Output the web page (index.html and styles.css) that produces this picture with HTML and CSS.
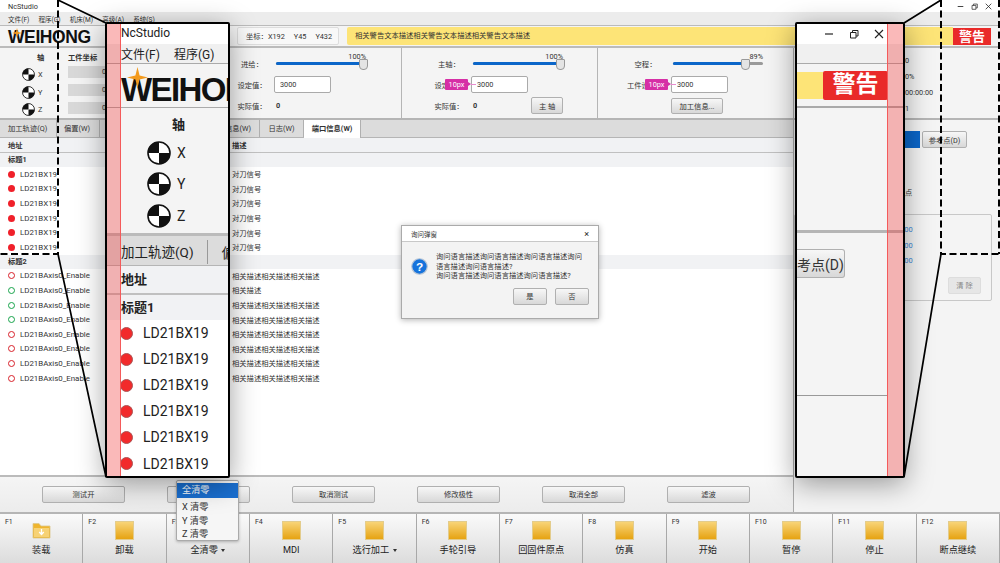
FILE: index.html
```html
<!DOCTYPE html>
<html>
<head>
    <title>NcStudio</title>
    <link rel="stylesheet" href="styles.css">
</head>
<body>
<svg class="defs" width="0" height="0">
    <symbol id="axis" viewBox="0 0 24 24">
        <circle cx="12" cy="12" r="11" fill="#fff" stroke="#111" stroke-width="1.6"/>
        <path d="M12 12V1A11 11 0 0 0 1 12Z" fill="#111"/>
        <path d="M12 12H23A11 11 0 0 1 12 23Z" fill="#111"/>
    </symbol>
    <symbol id="star" viewBox="0 0 20 20">
        <path d="M10 0L12 8 20 10 12 12 10 20 8 12 0 10 8 8Z" fill="#f39a1d"/>
    </symbol>
    <symbol id="winmin" viewBox="0 0 10 10"><path d="M1 5H9" stroke="#222" stroke-width="1.2"/></symbol>
    <symbol id="winmax" viewBox="0 0 10 10"><path d="M1.5 3.5H7V9H1.5ZM3.5 3.5V1.5H9V7H7" fill="none" stroke="#222" stroke-width="1"/></symbol>
    <symbol id="winclose" viewBox="0 0 10 10"><path d="M1 1L9 9M9 1L1 9" stroke="#222" stroke-width="1.1"/></symbol>
</svg>

<div class="app">
    <div class="titlebar">
        <span>NcStudio</span>
        <div class="winbtns">
            <svg class="winbtn"><use href="#winmin"/></svg>
            <svg class="winbtn"><use href="#winmax"/></svg>
            <svg class="winbtn"><use href="#winclose"/></svg>
        </div>
    </div>
    <div class="menubar">
        <span>文件(F)</span><span>程序(G)</span><span>机床(M)</span><span>高级(A)</span><span>系统(S)</span>
    </div>
    <div class="toolbar">
        <div class="logo">
            <svg class="logo-star"><use href="#star"/></svg>
            <span>WEIHONG</span>
        </div>
        <div class="coords"><span>坐标：X192</span><span>Y45</span><span>Y432</span></div>
        <div class="alert-text">相关警告文本描述相关警告文本描述相关警告文本描述</div>
        <div class="alert-tag">警告</div>
    </div>

    <div class="middle">
        <div class="work">
            <div class="control">
                <div class="axis-panel">
                    <div class="axis-col">
                        <div class="axis-title">轴</div>
                        <div class="axis-item"><svg class="axis-icon"><use href="#axis"/></svg>X</div>
                        <div class="axis-item"><svg class="axis-icon"><use href="#axis"/></svg>Y</div>
                        <div class="axis-item"><svg class="axis-icon"><use href="#axis"/></svg>Z</div>
                    </div>
                    <div class="coord-col">
                        <div class="coord-title">工件坐标</div>
                        <div class="coord-cell">0</div>
                        <div class="coord-cell">0</div>
                        <div class="coord-cell">0</div>
                    </div>
                </div>
                <div class="speed speed-feed">
                    <span class="speed-label">进给：</span>
                    <div class="slider"><div class="slider-fill" style="width:98%"></div><span class="pct">100%</span></div>
                    <span class="speed-label">设定值：</span>
                    <input class="field" type="text" value="3000">
                    <span class="speed-label">实际值：</span>
                    <div class="speed-value"><b>0</b></div>
                </div>
                <div class="speed speed-spindle">
                    <span class="speed-label">主轴：</span>
                    <div class="slider"><div class="slider-fill" style="width:98%"></div><span class="pct">100%</span></div>
                    <span class="speed-label">设定值：</span>
                    <input class="field" type="text" value="3000">
                    <span class="speed-label">实际值：</span>
                    <div class="speed-value"><b>0</b><button class="btn btn-spindle">主 轴</button></div>
                </div>
                <div class="speed speed-rapid">
                    <span class="speed-label">空程：</span>
                    <div class="slider"><div class="slider-fill" style="width:81%"></div><span class="pct">89%</span></div>
                    <span class="speed-label">工件设定值：</span>
                    <input class="field" type="text" value="3000">
                    <span></span>
                    <div class="speed-value"><button class="btn btn-info">加工信息...</button></div>
                </div>
            </div>

            <div class="tabs">
                <div class="tab tab-a">加工轨迹(Q)</div>
                <div class="tab tab-b">偏置(W)</div>
                <div class="tab tab-c">报警信息(W)</div>
                <div class="tab tab-d">日志(W)</div>
                <div class="tab tab-on">端口信息(W)</div>
            </div>

            <div class="table">
                <div class="thead"><span>地址</span><span>描述</span></div>
                <div class="group">标题1</div>
                <div class="row"><span class="port"><i class="dot on"></i>LD21BX19</span><span>对刀信号</span></div>
                <div class="row"><span class="port"><i class="dot on"></i>LD21BX19</span><span>对刀信号</span></div>
                <div class="row"><span class="port"><i class="dot on"></i>LD21BX19</span><span>对刀信号</span></div>
                <div class="row"><span class="port"><i class="dot on"></i>LD21BX19</span><span>对刀信号</span></div>
                <div class="row"><span class="port"><i class="dot on"></i>LD21BX19</span><span>对刀信号</span></div>
                <div class="row"><span class="port"><i class="dot on"></i>LD21BX19</span><span>对刀信号</span></div>
                <div class="group">标题2</div>
                <div class="row"><span class="port"><i class="dot red"></i>LD21BAxis0_Enable</span><span>相关描述相关描述相关描述</span></div>
                <div class="row"><span class="port"><i class="dot green"></i>LD21BAxis0_Enable</span><span>相关描述</span></div>
                <div class="row"><span class="port"><i class="dot green"></i>LD21BAxis0_Enable</span><span>相关描述相关描述相关描述</span></div>
                <div class="row"><span class="port"><i class="dot green"></i>LD21BAxis0_Enable</span><span>相关描述相关描述相关描述</span></div>
                <div class="row"><span class="port"><i class="dot red"></i>LD21BAxis0_Enable</span><span>相关描述相关描述相关描述</span></div>
                <div class="row"><span class="port"><i class="dot red"></i>LD21BAxis0_Enable</span><span>相关描述相关描述相关描述</span></div>
                <div class="row"><span class="port"><i class="dot red"></i>LD21BAxis0_Enable</span><span>相关描述相关描述相关描述</span></div>
                <div class="row"><span class="port"><i class="dot red"></i>LD21BAxis0_Enable</span><span>相关描述相关描述相关描述</span></div>
            </div>

            <div class="actions">
                <button class="btn btn-act">测试开</button>
                <button class="btn btn-act">测试关</button>
                <button class="btn btn-act">取消测试</button>
                <button class="btn btn-act">修改极性</button>
                <button class="btn btn-act">取消全部</button>
                <button class="btn btn-act">滤波</button>
            </div>
        </div>

        <div class="side">
            <div class="stats">
                <div>0</div>
                <div>0%</div>
                <div>00:00:00</div>
                <div>1</div>
            </div>
            <div class="side-body">
                <div class="side-tabs">
                    <button class="btn btn-blue">工件(S)</button>
                    <button class="btn btn-ref">参考点(D)</button>
                </div>
                <div class="side-label">点</div>
                <div class="groupbox">
                    <div class="num">000</div>
                    <div class="num">000</div>
                    <div class="num">000</div>
                    <button class="btn btn-clear">清 除</button>
                </div>
            </div>
        </div>
    </div>

    <div class="fkeys">
        <div class="fkey"><span class="fnum">F1</span>
            <svg class="ficon" viewBox="0 0 19 19">
                <path d="M1 5V2.5H7L9 5H18V17H1Z" fill="#efb52e" stroke="#dcc68c" stroke-width=".8"/>
                <path d="M2 7H17V16H2Z" fill="#f7d275"/>
                <path d="M9.5 8V13M7.2 11L9.5 13.5 11.8 11" fill="none" stroke="#fff" stroke-width="1.3"/>
            </svg>
            <span class="flabel">装载</span></div>
        <div class="fkey"><span class="fnum">F2</span><i class="fbox"></i><span class="flabel">卸载</span></div>
        <div class="fkey"><span class="fnum">F3</span><i class="fbox"></i><span class="flabel">全清零 <u class="caret"></u></span></div>
        <div class="fkey"><span class="fnum">F4</span><i class="fbox"></i><span class="flabel">MDI</span></div>
        <div class="fkey"><span class="fnum">F5</span><i class="fbox"></i><span class="flabel">选行加工 <u class="caret"></u></span></div>
        <div class="fkey"><span class="fnum">F6</span><i class="fbox"></i><span class="flabel">手轮引导</span></div>
        <div class="fkey"><span class="fnum">F7</span><i class="fbox"></i><span class="flabel">回固件原点</span></div>
        <div class="fkey"><span class="fnum">F8</span><i class="fbox"></i><span class="flabel">仿真</span></div>
        <div class="fkey"><span class="fnum">F9</span><i class="fbox"></i><span class="flabel">开始</span></div>
        <div class="fkey"><span class="fnum">F10</span><i class="fbox"></i><span class="flabel">暂停</span></div>
        <div class="fkey"><span class="fnum">F11</span><i class="fbox"></i><span class="flabel">停止</span></div>
        <div class="fkey"><span class="fnum">F12</span><i class="fbox"></i><span class="flabel">断点继续</span></div>
    </div>
</div>

<!-- measure tags -->
<div class="tag tag-spindle">10px</div>
<div class="tag tag-rapid">10px</div>

<!-- F3 drop down -->
<div class="popup">
    <div class="popup-on">全清零</div>
    <div class="popup-item">X 清零</div>
    <div class="popup-item">Y 清零</div>
    <div class="popup-item">Z 清零</div>
</div>

<!-- dialog -->
<div class="dialog">
    <div class="dialog-title"><span>询问弹窗</span><span class="dialog-x">×</span></div>
    <div class="dialog-body">
        <div class="dialog-msg">
            <svg class="dialog-icon" viewBox="0 0 18 18">
                <circle cx="9" cy="9" r="8.2" fill="#1673dc" stroke="#b9c6d6" stroke-width="1.2"/>
                <text x="9" y="13.4" text-anchor="middle" class="dialog-q">?</text>
            </svg>
            <p>询问语言描述询问语言描述询问语言描述询问<br>语言描述询问语言描述?<br>询问语言描述询问语言描述询问语言描述?</p>
        </div>
        <div class="dialog-btns">
            <button class="btn btn-dlg">是</button>
            <button class="btn btn-dlg">否</button>
        </div>
    </div>
</div>

<!-- zoom guides -->
<svg class="guides" viewBox="0 0 1000 563">
    <path d="M58 0V254H0M941 0V254H1000M999 0V254" fill="none" stroke="#000" stroke-width="2" stroke-dasharray="7 3.5"/>
    <path d="M58 0L106 23M58 254L106 477M904 23L941 0M904 477L941 254" fill="none" stroke="#000" stroke-width="1.7"/>
</svg>

<!-- left magnifier -->
<div class="mag mag-left">
    <div class="ml-title">NcStudio</div>
    <div class="ml-menu"><span>文件(F)</span><span>程序(G)</span><span>机床(M)</span></div>
    <div class="ml-logo">
        <svg class="ml-star"><use href="#star"/></svg>
        <span>WEIHONG</span>
    </div>
    <div class="ml-axis">
        <div class="ml-axis-title">轴</div>
        <div class="ml-axis-item"><svg class="ml-axis-icon"><use href="#axis"/></svg>X</div>
        <div class="ml-axis-item"><svg class="ml-axis-icon"><use href="#axis"/></svg>Y</div>
        <div class="ml-axis-item"><svg class="ml-axis-icon"><use href="#axis"/></svg>Z</div>
    </div>
    <div class="ml-tabs"><span class="ml-tab">加工轨迹(Q)</span><span class="ml-tab2">偏置(W)</span></div>
    <div class="ml-head">地址</div>
    <div class="ml-group">标题1</div>
    <div class="ml-row"><i class="ml-dot"></i>LD21BX19</div>
    <div class="ml-row"><i class="ml-dot"></i>LD21BX19</div>
    <div class="ml-row"><i class="ml-dot"></i>LD21BX19</div>
    <div class="ml-row"><i class="ml-dot"></i>LD21BX19</div>
    <div class="ml-row"><i class="ml-dot"></i>LD21BX19</div>
    <div class="ml-row"><i class="ml-dot"></i>LD21BX19</div>
    <div class="stripe"></div>
</div>

<!-- right magnifier -->
<div class="mag mag-right">
    <div class="mr-title">
        <svg class="mr-winbtn"><use href="#winmin"/></svg>
        <svg class="mr-winbtn"><use href="#winmax"/></svg>
        <svg class="mr-winbtn"><use href="#winclose"/></svg>
    </div>
    <div class="mr-menu"></div>
    <div class="mr-alert"><div class="mr-yellow"></div><div class="mr-red">警告</div></div>
    <div class="mr-gap"></div>
    <div class="mr-tabs"><button class="btn mr-ref">考点(D)</button></div>
    <div class="mr-foot"></div>
    <div class="stripe"></div>
</div>
</body>
</html>
```

FILE: styles.css
```css
* {
    box-sizing: border-box;
}

html, body {
    margin: 0;
    padding: 0;
    width: 1000px;
    height: 563px;
    overflow: hidden;
}

body {
    position: relative;
    font-family: Roboto, "Noto Sans CJK SC", sans-serif;
    font-size: 7.3px;
    color: #333;
    background-color: #f4f4f4;
}

.defs {
    position: absolute;
}

.app {
    display: flex;
    flex-direction: column;
    height: 563px;
}

/* top bars */
.titlebar {
    height: 12px;
    flex: none;
    display: flex;
    align-items: center;
    justify-content: space-between;
    padding: 0 8px;
    background-color: #fff;
}

.winbtns {
    display: flex;
    gap: 7px;
}

.winbtn {
    width: 7px;
    height: 7px;
}

.menubar {
    height: 13px;
    flex: none;
    display: flex;
    align-items: center;
    gap: 9px;
    padding-left: 8px;
    font-size: 6.6px;
    background-color: #ececec;
}

.toolbar {
    height: 23px;
    flex: none;
    display: flex;
    align-items: center;
    border-top: 1px solid #bbb;
    border-bottom: 2px solid #bbb;
    background-color: #f4f4f4;
}

.logo {
    width: 237px;
    padding: 3px 0 0 8px;
    position: relative;
    font-family: "Liberation Sans", sans-serif;
    font-weight: bold;
    font-size: 17.5px;
    line-height: 17px;
    letter-spacing: -.4px;
    color: #111;
}

.logo-star {
    position: absolute;
    left: 12px;
    top: 2px;
    width: 10px;
    height: 10px;
}

.coords {
    width: 102px;
    height: 18px;
    display: flex;
    align-items: center;
    gap: 9px;
    padding-left: 8px;
    background-color: #f8f8f8;
    border: 1px solid #ddd;
    border-radius: 2px;
}

.alert-text {
    width: 606px;
    height: 18px;
    margin-left: 8px;
    padding-left: 8px;
    line-height: 18px;
    background-color: #fde477;
    border-radius: 2px 0 0 2px;
}

.alert-tag {
    width: 38px;
    height: 17px;
    line-height: 17px;
    text-align: center;
    font-size: 13px;
    font-weight: bold;
    color: #fff;
    background-color: #e92a29;
}

/* middle */
.middle {
    flex: 1;
    display: flex;
    min-height: 0;
}

.work {
    width: 794px;
    display: flex;
    flex-direction: column;
    border-right: 1px solid #aaa;
}

.control {
    height: 72px;
    flex: none;
    display: flex;
    border-bottom: 2px solid #b5b5b5;
}

.axis-panel {
    width: 230px;
    display: flex;
}

.axis-col {
    width: 68px;
    padding-left: 22px;
}

.axis-title {
    height: 18px;
    line-height: 20px;
    padding-left: 15px;
    font-weight: bold;
}

.axis-item {
    height: 17.5px;
    display: flex;
    align-items: center;
    gap: 3px;
}

.axis-icon {
    width: 13px;
    height: 13px;
}

.coord-col {
    width: 100px;
}

.coord-title {
    height: 18px;
    line-height: 20px;
    font-weight: bold;
}

.coord-cell {
    width: 80px;
    height: 12px;
    line-height: 12px;
    margin-bottom: 6px;
    padding-left: 34px;
    background-color: #d8d8d8;
}

.speed {
    display: grid;
    grid-auto-rows: 21px;
    align-items: center;
    padding-top: 5px;
    border-left: 1px solid #b5b5b5;
}

.speed-label {
    text-align: center;
    white-space: nowrap;
}

.speed-feed {
    width: 171px;
    padding-left: 7px;
    grid-template-columns: 30px 92px;
    column-gap: 7px;
    border-left: none;
}

.speed-spindle {
    width: 196px;
    padding-left: 32px;
    grid-template-columns: 30px 92px;
    column-gap: 7px;
}

.speed-rapid {
    flex: 1;
    padding-left: 29px;
    grid-template-columns: 37px 92px;
    column-gap: 7px;
}

.slider {
    position: relative;
    height: 3px;
    margin-left: 2px;
    background-color: #9a9a9a;
    border-radius: 2px;
}

.slider-fill {
    position: relative;
    height: 3px;
    background-color: #0b66c9;
    border-radius: 2px;
}

.slider-fill::after {
    content: "";
    position: absolute;
    right: -4px;
    top: -3px;
    width: 7px;
    height: 9px;
    background-color: #e4e4e4;
    border: 1px solid #999;
    border-radius: 1px 1px 4px 4px;
}

.pct {
    position: absolute;
    right: 0;
    bottom: 4px;
    line-height: 9px;
}

.field {
    width: 57px;
    height: 17px;
    padding: 0 5px;
    font: inherit;
    color: #333;
    background-color: #fff;
    border: 1px solid #aaa;
    border-radius: 2px;
}

.speed-value {
    display: flex;
    align-items: center;
    padding-left: 2px;
}

.btn {
    font: inherit;
    color: #333;
    padding: 0;
    background: linear-gradient(#f7f7f7, #d8d8d8);
    border: 1px solid #b0b0b0;
    border-radius: 2px;
}

.btn-spindle {
    width: 33px;
    height: 17px;
    margin-left: 54px;
}

.btn-info {
    width: 52px;
    height: 16px;
    margin-left: -2px;
}

/* tabs and table */
.tabs {
    height: 18px;
    flex: none;
    display: flex;
    background-color: #dcdcdc;
    border-bottom: 1px solid #b5b5b5;
}

.tab {
    line-height: 17px;
    border-right: 1px solid #b0b0b0;
    white-space: nowrap;
}

.tab-a {
    width: 57px;
    padding-left: 8px;
}

.tab-b {
    width: 43px;
    padding-left: 7px;
}

.tab-c {
    width: 160px;
    text-align: right;
    padding-right: 8px;
}

.tab-d {
    width: 44px;
    text-align: center;
}

.tab-on {
    width: 57px;
    text-align: center;
    font-weight: bold;
    background-color: #fff;
    height: 18px;
}

.table {
    flex: 1;
    min-height: 0;
    background-color: #fff;
    border-bottom: 2px solid #bbb;
}

.thead {
    height: 15px;
    display: grid;
    grid-template-columns: 224px 1fr;
    align-items: center;
    padding-left: 8px;
    font-weight: bold;
    background-color: #f1f2f4;
    border-bottom: 1px solid #c0c0c0;
}

.group {
    height: 14px;
    line-height: 14px;
    padding-left: 8px;
    font-weight: bold;
    background-color: #f1f2f4;
}

.row {
    height: 14.6px;
    display: grid;
    grid-template-columns: 232px 1fr;
    align-items: center;
}

.port {
    display: flex;
    align-items: center;
    padding-left: 8px;
    font-size: 7.9px;
}

.dot {
    width: 7px;
    height: 7px;
    margin-right: 5px;
    border-radius: 50%;
}

.dot.on {
    background-color: #f0202a;
}

.dot.red {
    border: 1.5px solid #d8202a;
}

.dot.green {
    border: 1.5px solid #16a34a;
}

.actions {
    height: 35px;
    flex: none;
    display: flex;
    align-items: center;
    gap: 42px;
    padding: 0 0 1px 42px;
    background: linear-gradient(#f5f5f5, #ececec);
}

.btn-act {
    width: 83px;
    height: 17px;
}

/* right side */
.side {
    flex: 1;
    display: flex;
    flex-direction: column;
}

.stats {
    height: 72px;
    flex: none;
    padding: 5px 0 0 111px;
    border-bottom: 2px solid #b5b5b5;
}

.stats div {
    height: 16px;
    line-height: 16px;
}

.side-body {
    flex: 1;
    padding-right: 8px;
}

.side-tabs {
    display: flex;
    justify-content: flex-end;
    gap: 2px;
    margin: 11px 25px 0 0;
}

.btn-blue {
    width: 60px;
    height: 17px;
    color: #fff;
    background: #0b66c9;
    border-color: #0b66c9;
    border-radius: 0;
}

.btn-ref {
    width: 45px;
    height: 17px;
}

.side-label {
    margin: 39px 0 0 111px;
    line-height: 12px;
}

.groupbox {
    margin-top: 15px;
    height: 87px;
    padding: 8px 0 0 105px;
    border: 1px solid #c8c8c8;
    border-radius: 2px;
}

.num {
    height: 15.5px;
    line-height: 14px;
    color: #3b86d6;
    font-size: 7.5px;
}

.btn-clear {
    display: block;
    width: 33px;
    height: 17px;
    margin: 7px 0 0 48px;
    color: #888;
    background: #e6e6e6;
    border-color: #ddd;
}

/* function keys */
.fkeys {
    height: 51px;
    flex: none;
    display: grid;
    grid-template-columns: repeat(12, 1fr);
    border-top: 2px solid #b5b5b5;
}

.fkey {
    position: relative;
    display: flex;
    flex-direction: column;
    align-items: center;
    padding-top: 7px;
    background: linear-gradient(#fafafa, #dcdcdc);
    border-right: 1px solid #a8a8a8;
}

.fnum {
    position: absolute;
    left: 5px;
    top: 4px;
    font-size: 7px;
}

.fbox {
    width: 19px;
    height: 19px;
    background: linear-gradient(#f8d478, #e6a312);
    border: 1px solid #e3cc8c;
}

.ficon {
    width: 19px;
    height: 19px;
}

.flabel {
    margin-top: 3px;
    line-height: 14px;
    font-size: 9.2px;
    color: #222;
}

.caret {
    display: inline-block;
    margin-left: 1px;
    vertical-align: middle;
    border-top: 3px solid #333;
    border-left: 2.5px solid transparent;
    border-right: 2.5px solid transparent;
}

/* overlays */
.tag {
    position: absolute;
    top: 79px;
    width: 23px;
    height: 11px;
    line-height: 11px;
    text-align: center;
    font-size: 7.3px;
    color: #fff;
    background-color: #d62fa6;
    border-radius: 1px;
}

.tag::after {
    content: "";
    position: absolute;
    left: 23px;
    top: 3px;
    border-left: 3px solid #d62fa6;
    border-top: 2.5px solid transparent;
    border-bottom: 2.5px solid transparent;
}

.tag::before {
    content: "";
    position: absolute;
    left: 26px;
    top: 5px;
    width: 5px;
    height: 1px;
    background-color: #e98bd0;
}

.tag-spindle {
    left: 445px;
}

.tag-rapid {
    left: 645px;
}

.popup {
    position: absolute;
    left: 176px;
    top: 480px;
    width: 63px;
    height: 61px;
    padding-top: 2px;
    font-size: 9.2px;
    background-color: #f6f6f6;
    border: 1px solid #aaa;
    border-radius: 2px;
    box-shadow: 0 1px 3px rgba(0, 0, 0, 0.25);
}

.popup-on {
    height: 15px;
    line-height: 14px;
    padding-left: 5px;
    margin-bottom: 2px;
    color: #fff;
    background-color: #1a6fd0;
}

.popup-item {
    height: 13.5px;
    line-height: 13.5px;
    padding-left: 5px;
}

.dialog {
    position: absolute;
    left: 401px;
    top: 225px;
    width: 198px;
    height: 94px;
    background-color: #f3f3f3;
    border: 1px solid #aaa;
    box-shadow: 0 1px 6px rgba(0, 0, 0, 0.3);
}

.dialog-title {
    height: 16px;
    display: flex;
    justify-content: space-between;
    align-items: center;
    padding: 0 9px;
    font-size: 6.5px;
    background-color: #fff;
    border-bottom: 1px solid #c8c8c8;
}

.dialog-x {
    font-size: 9px;
    color: #222;
}

.dialog-msg {
    display: flex;
    align-items: flex-start;
    padding: 10px 0 0 9px;
}

.dialog-icon {
    width: 17px;
    height: 17px;
    margin: 6px 8px 0 0;
    flex: none;
}

.dialog-q {
    fill: #fff;
    font-family: "Liberation Sans", sans-serif;
    font-weight: bold;
    font-size: 12.5px;
}

.dialog-msg p {
    margin: 0;
    line-height: 9.6px;
}

.dialog-btns {
    display: flex;
    justify-content: flex-end;
    gap: 8px;
    padding: 7px 9px 0 0;
}

.btn-dlg {
    width: 34px;
    height: 17px;
}

.guides {
    position: absolute;
    left: 0;
    top: 0;
    width: 1000px;
    height: 563px;
}

/* magnifiers */
.mag {
    position: absolute;
    top: 22px;
    height: 456px;
    overflow: hidden;
    background-color: #f4f4f4;
    border: 2px solid #000;
    border-radius: 2px;
    box-shadow: 0 6px 28px rgba(0, 0, 0, 0.38);
}

.mag-left {
    left: 105px;
    width: 125px;
    color: #222;
}

.mag-right {
    left: 795px;
    width: 110px;
}

.stripe {
    position: absolute;
    top: 0;
    bottom: 0;
    background-color: rgba(240, 60, 60, 0.36);
}

.mag-left .stripe {
    left: 0;
    width: 13.5px;
    border-right: 1.5px solid #f45a5a;
}

.mag-right .stripe {
    right: 0;
    width: 16px;
    border-left: 1.5px solid #f45a5a;
}

.ml-title {
    height: 20px;
    line-height: 19px;
    padding-left: 14px;
    font-size: 12px;
    background-color: #fff;
}

.ml-menu {
    height: 20px;
    display: flex;
    gap: 14px;
    align-items: center;
    padding-left: 14px;
    font-size: 12px;
    white-space: nowrap;
    background-color: #f0f0f0;
    border-bottom: 1px solid #aaa;
}

.ml-logo {
    position: relative;
    height: 44px;
    padding: 9px 0 0 14px;
    font-family: "Liberation Sans", sans-serif;
    font-weight: bold;
    font-size: 33px;
    line-height: 34px;
    letter-spacing: -1.6px;
    color: #111;
    white-space: nowrap;
    border-bottom: 1px solid #aaa;
}

.ml-star {
    position: absolute;
    left: 20px;
    top: 3px;
    width: 21px;
    height: 21px;
}

.ml-axis {
    height: 128px;
    font-size: 14px;
    padding-left: 40px;
    border-bottom: 3px solid #bbb;
}

.ml-axis-title {
    height: 29px;
    line-height: 34px;
    padding-left: 25px;
    font-size: 13px;
    font-weight: bold;
}

.ml-axis-item {
    height: 31.5px;
    display: flex;
    align-items: center;
    gap: 6px;
}

.ml-axis-icon {
    width: 24px;
    height: 24px;
}

.ml-tabs {
    height: 30px;
    display: flex;
    align-items: center;
    padding: 2px 0 0 14px;
    white-space: nowrap;
    background-color: #dcdcdc;
    border-bottom: 1px solid #b5b5b5;
}

.ml-tab {
    padding-right: 13px;
    border-right: 1px solid #999;
    line-height: 24px;
    font-size: 13.5px;
}

.ml-tab2 {
    padding-left: 14px;
    font-size: 13.5px;
}

.ml-head {
    height: 29px;
    line-height: 27px;
    padding-left: 14px;
    font-size: 13px;
    font-weight: bold;
    background-color: #f1f2f4;
    border-bottom: 2px solid #c0c0c0;
}

.ml-group {
    height: 25px;
    line-height: 26px;
    padding-left: 14px;
    font-size: 13px;
    font-weight: bold;
    background-color: #f1f2f4;
}

.ml-row {
    height: 26.1px;
    display: flex;
    align-items: center;
    padding-left: 13px;
    font-size: 14px;
    background-color: #fff;
}

.ml-dot {
    width: 13px;
    height: 13px;
    margin-right: 10px;
    border-radius: 50%;
    background-color: #f22a2b;
    border: 1px solid #a55;
}

.mr-title {
    height: 20px;
    display: flex;
    align-items: center;
    gap: 15px;
    padding-left: 27px;
    background-color: #fff;
}

.mr-winbtn {
    width: 10px;
    height: 10px;
}

.mr-menu {
    height: 20px;
    background-color: #f0f0f0;
    border-bottom: 1px solid #aaa;
}

.mr-alert {
    height: 44px;
    display: flex;
    align-items: center;
    border-bottom: 2px solid #aaa;
}

.mr-yellow {
    width: 26px;
    height: 27px;
    background-color: #fde477;
}

.mr-red {
    width: 65px;
    height: 29px;
    line-height: 28px;
    text-align: center;
    font-size: 23px;
    font-weight: bold;
    color: #fff;
    background-color: #e92a29;
    border-radius: 2px;
}

.mr-gap {
    height: 125px;
    border-bottom: 3px solid #b5b5b5;
}

.mr-tabs {
    height: 163px;
    padding-top: 16px;
    border-bottom: 1px solid #999;
    margin-right: 15px;
}

.mr-ref {
    display: block;
    width: 48px;
    height: 29px;
    font-size: 14px;
    white-space: nowrap;
    overflow: hidden;
    text-align: right;
    padding-right: 4px;
    border-left: none;
    border-radius: 0 3px 3px 0;
}
```
